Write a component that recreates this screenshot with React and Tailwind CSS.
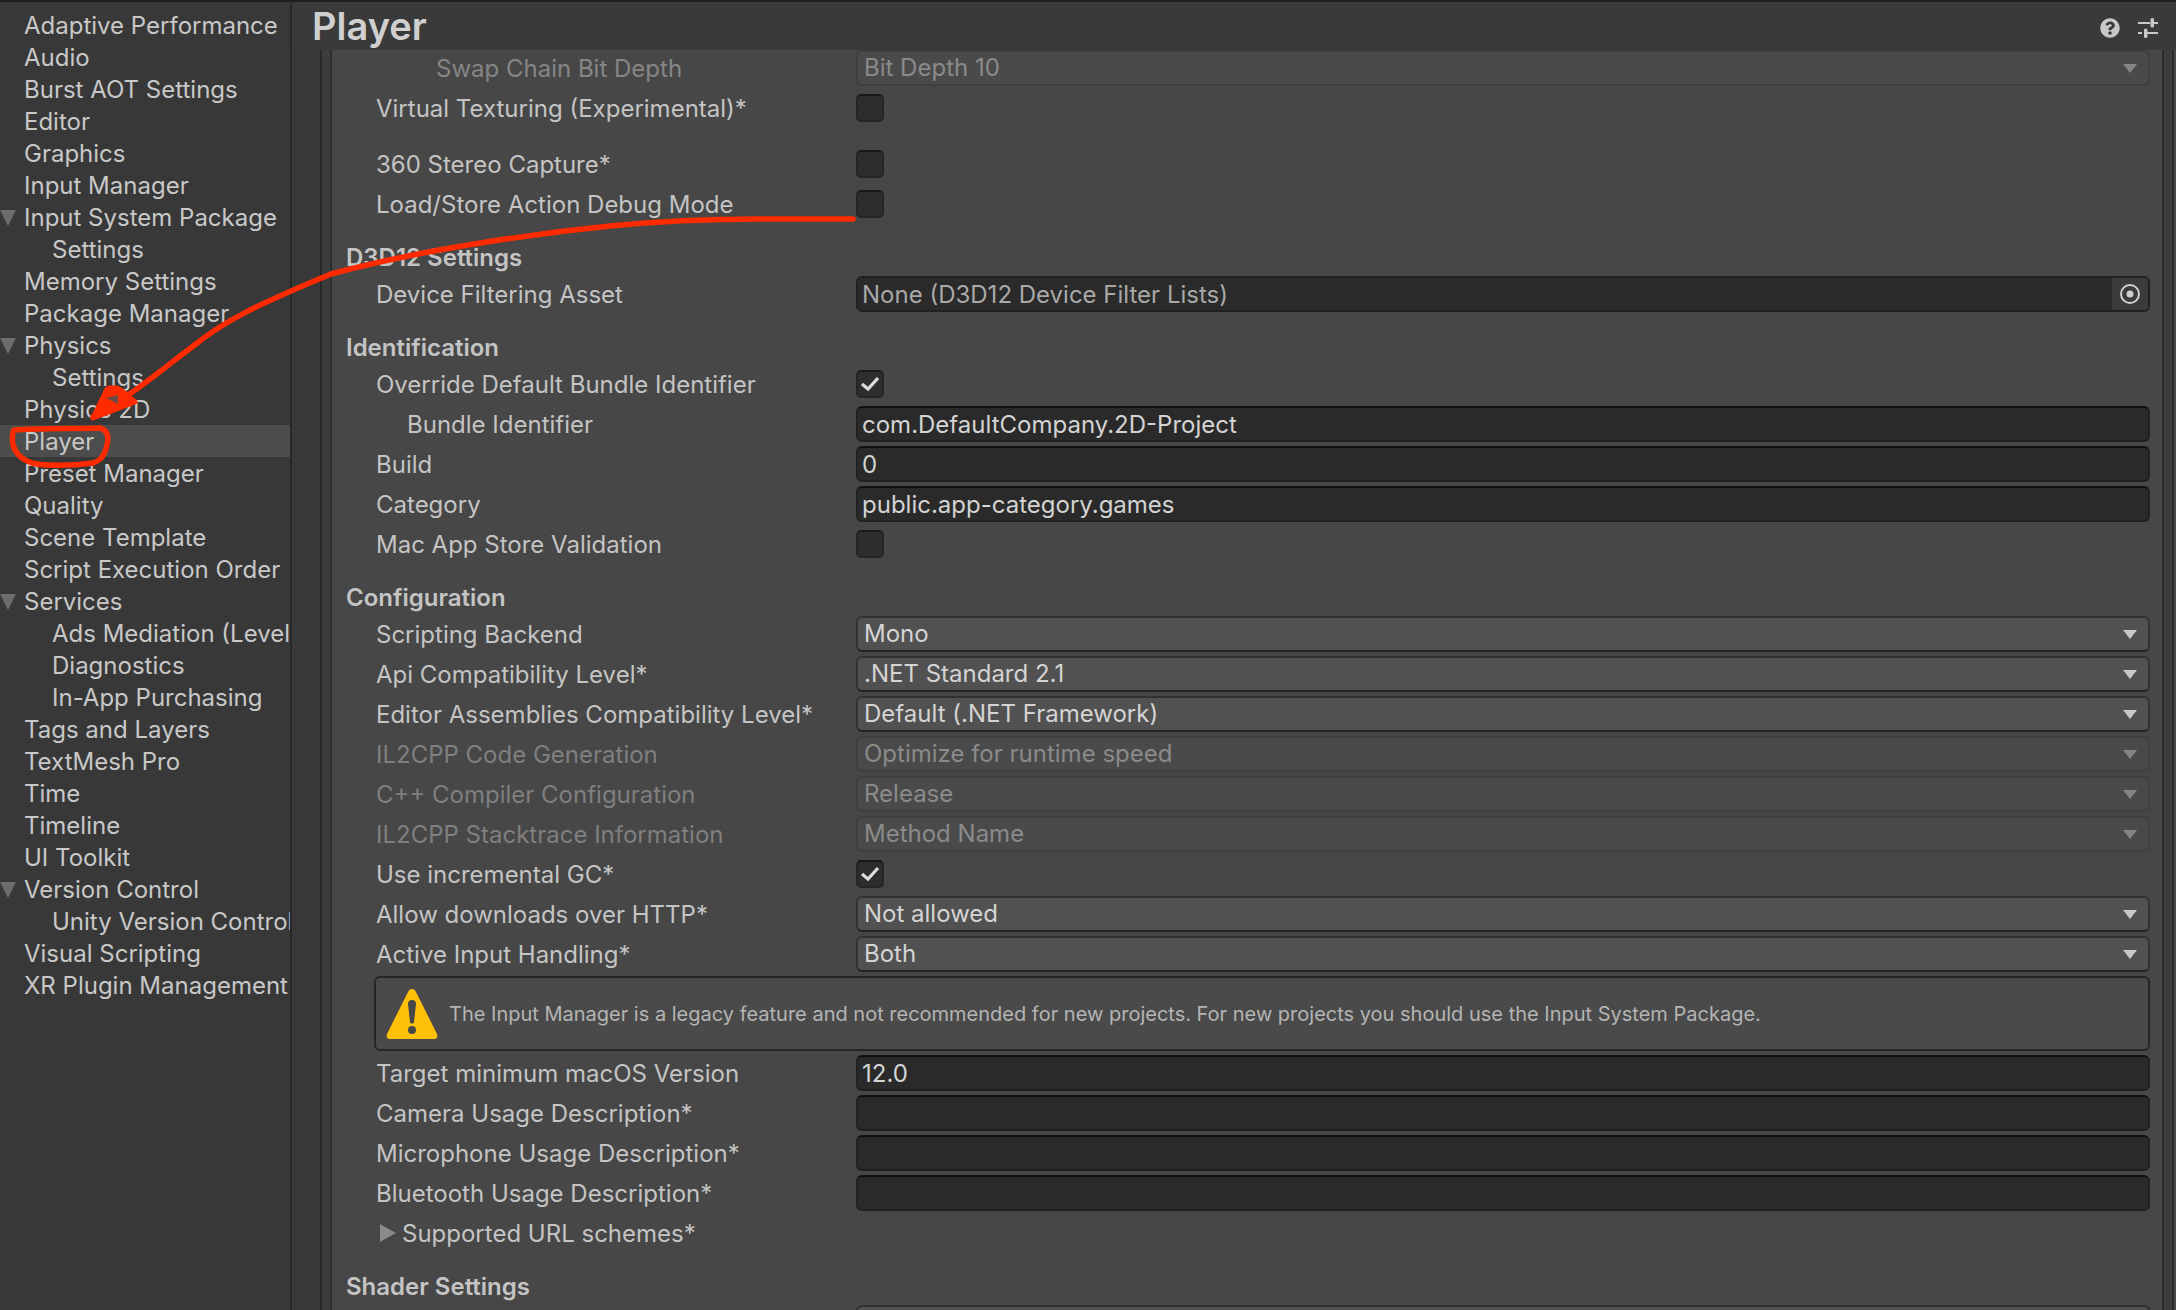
import React from "react";
import { FaQuestionCircle } from "react-icons/fa";

const sidebar = [
  ["Adaptive Performance"], ["Audio"], ["Burst AOT Settings"], ["Editor"], ["Graphics"], ["Input Manager"],
  ["Input System Package", "open"], ["Settings", "child"], ["Memory Settings"], ["Package Manager"],
  ["Physics", "open"], ["Settings", "child"], ["Physics 2D"], ["Player", "selected"], ["Preset Manager"],
  ["Quality"], ["Scene Template"], ["Script Execution Order"], ["Services", "open"],
  ["Ads Mediation (Level", "child"], ["Diagnostics", "child"], ["In-App Purchasing", "child"],
  ["Tags and Layers"], ["TextMesh Pro"], ["Time"], ["Timeline"], ["UI Toolkit"], ["Version Control", "open"],
  ["Unity Version Control", "child"], ["Visual Scripting"], ["XR Plugin Management"],
];

function DownArrow({ disabled }) {
  return (
    <svg width="14" height="9" viewBox="0 0 14 9" className="shrink-0">
      <polygon points="0,0 14,0 7,9" fill={disabled ? "#858585" : "#c8c8c8"} />
    </svg>
  );
}

function Dropdown({ value, disabled }) {
  return (
    <div
      className={
        disabled
          ? "flex h-9 w-full items-center justify-between rounded-md border-2 border-[#3f3f3f] bg-[#4a4a4a] pl-[6px] pr-[11px] text-[#8a8a8a]"
          : "flex h-9 w-full items-center justify-between rounded-md border-2 border-[#313131] border-b-[#232323] bg-[#515151] pl-[6px] pr-[11px] text-[#d4d4d4]"
      }
    >
      <span>{value}</span>
      <DownArrow disabled={disabled} />
    </div>
  );
}

function TextField({ value }) {
  return (
    <div className="flex h-9 w-full items-center rounded-md border-2 border-[#212121] border-t-[#0f0f0f] bg-[#2a2a2a] pl-1 pt-[2px] text-[#d4d4d4]">
      {value}
    </div>
  );
}

function ObjectField({ value }) {
  return (
    <div className="flex h-9 w-full items-center overflow-hidden rounded-md border-2 border-[#212121] bg-[#2a2a2a] pl-1 text-[#a8a8a8]">
      <span className="flex-1 pt-[2px]">{value}</span>
      <span className="flex h-full w-9 items-center justify-center bg-[#3b3b3b]">
        <svg width="22" height="22" viewBox="0 0 22 22">
          <circle cx="11" cy="11" r="9" fill="none" stroke="#cfcfcf" strokeWidth="2" />
          <circle cx="11" cy="11" r="3.5" fill="#cfcfcf" />
        </svg>
      </span>
    </div>
  );
}

function Checkbox({ checked }) {
  return (
    <div className="flex h-7 w-7 items-center justify-center rounded-[5px] border-2 border-[#252525] border-t-[#181818] bg-[#2d2d2d]">
      {checked && (
        <svg width="20" height="16" viewBox="0 0 20 16">
          <polyline points="2,8 8,13 18,2" fill="none" stroke="#dcdcdc" strokeWidth="3.2" />
        </svg>
      )}
    </div>
  );
}

function Row({ label, indent = "pl-[44px]", tone = "text-[#c4c4c4]", children }) {
  return (
    <div className="flex h-9 shrink-0 items-center">
      <div className={`w-[524px] shrink-0 whitespace-nowrap pt-[2px] ${indent} ${tone}`}>{label}</div>
      <div className="flex flex-1 items-center">{children}</div>
    </div>
  );
}

function Heading({ children }) {
  return (
    <div className="flex h-[46px] shrink-0 items-center pl-[14px] pt-[18px] font-semibold text-[#c4c4c4]">{children}</div>
  );
}

function WarningIcon() {
  return (
    <svg width="52" height="52" viewBox="0 0 52 52" className="shrink-0">
      <path d="M26 1 C28 1 29 2 30 4 L51 46 C52 49 51 51 48 51 L4 51 C1 51 0 49 1 46 L22 4 C23 2 24 1 26 1 Z" fill="#ffc107" />
      <path d="M26 12 C29 12 30 14 30 16 L28 34 C28 36 24 36 24 34 L22 16 C22 14 23 12 26 12 Z" fill="#474747" />
      <circle cx="26" cy="42" r="4" fill="#474747" />
    </svg>
  );
}

function Sidebar() {
  return (
    <aside className="w-[292px] shrink-0 overflow-hidden border-r-2 border-[#282828] bg-[#383838] pt-[7px]">
      {sidebar.map(([name, kind], i) => (
        <div
          key={i}
          className={`relative flex h-8 items-center overflow-hidden whitespace-nowrap pt-[2px] text-[#c8c8c8] ${
            kind === "selected" ? "bg-[#4d4d4d]" : ""
          } ${kind === "child" ? "pl-[52px]" : "pl-[24px]"}`}
        >
          {kind === "open" && (
            <svg width="16" height="16" viewBox="0 0 16 16" className="absolute left-0 top-[9px]">
              <polygon points="0,0 16,0 8,16" fill="#6d6d6d" />
            </svg>
          )}
          {name}
        </div>
      ))}
    </aside>
  );
}

function Header() {
  return (
    <header className="flex h-12 shrink-0 items-center justify-between bg-[#3a3a3a] pl-[20px] pr-[18px]">
      <h1 className="text-[38px] font-semibold leading-none text-[#d0d0d0]">Player</h1>
      <div className="flex items-center gap-[18px] pt-1">
        <FaQuestionCircle size={20} color="#c8c8c8" />
        <svg width="20" height="20" viewBox="0 0 20 20" fill="none">
          <path d="M0 5 H12 M16 5 H20 M0 15 H4 M8 15 H20" stroke="#c8c8c8" strokeWidth="2" />
          <rect x="12.5" y="0" width="3.5" height="9.5" rx="1.5" fill="#c8c8c8" />
          <rect x="6" y="10.5" width="3.5" height="9.5" rx="1.5" fill="#c8c8c8" />
        </svg>
      </div>
    </header>
  );
}

function Settings() {
  const dim = "text-[#7f7f7f]";
  return (
    <div className="flex h-full flex-col gap-1 overflow-hidden bg-[#474747] pr-3">
      <Row label="Swap Chain Bit Depth" indent="pl-[104px]" tone="text-[#868686]">
        <Dropdown value="Bit Depth 10" disabled />
      </Row>
      <Row label="Virtual Texturing (Experimental)*"><Checkbox /></Row>
      <div className="mt-4 shrink-0">
        <Row label="360 Stereo Capture*"><Checkbox /></Row>
      </div>
      <Row label="Load/Store Action Debug Mode"><Checkbox /></Row>
      <Heading>D3D12 Settings</Heading>
      <Row label="Device Filtering Asset"><ObjectField value="None (D3D12 Device Filter Lists)" /></Row>
      <Heading>Identification</Heading>
      <Row label="Override Default Bundle Identifier"><Checkbox checked /></Row>
      <Row label="Bundle Identifier" indent="pl-[75px]"><TextField value="com.DefaultCompany.2D-Project" /></Row>
      <Row label="Build"><TextField value="0" /></Row>
      <Row label="Category"><TextField value="public.app-category.games" /></Row>
      <Row label="Mac App Store Validation"><Checkbox /></Row>
      <Heading>Configuration</Heading>
      <Row label="Scripting Backend"><Dropdown value="Mono" /></Row>
      <Row label="Api Compatibility Level*"><Dropdown value=".NET Standard 2.1" /></Row>
      <Row label="Editor Assemblies Compatibility Level*"><Dropdown value="Default (.NET Framework)" /></Row>
      <Row label="IL2CPP Code Generation" tone={dim}><Dropdown value="Optimize for runtime speed" disabled /></Row>
      <Row label="C++ Compiler Configuration" tone={dim}><Dropdown value="Release" disabled /></Row>
      <Row label="IL2CPP Stacktrace Information" tone={dim}><Dropdown value="Method Name" disabled /></Row>
      <Row label="Use incremental GC*"><Checkbox checked /></Row>
      <Row label="Allow downloads over HTTP*"><Dropdown value="Not allowed" /></Row>
      <Row label="Active Input Handling*"><Dropdown value="Both" /></Row>
      <div className="ml-[42px] flex h-[75px] shrink-0 items-center gap-[11px] rounded-md border-2 border-[#262626] bg-[#4a4a4a] pl-[10px] text-[20px] text-[#b4b4b4]">
        <WarningIcon />
        <span className="whitespace-nowrap">
          The Input Manager is a legacy feature and not recommended for new projects. For new projects you should use the Input System Package.
        </span>
      </div>
      <Row label="Target minimum macOS Version"><TextField value="12.0" /></Row>
      <Row label="Camera Usage Description*"><TextField /></Row>
      <Row label="Microphone Usage Description*"><TextField /></Row>
      <Row label="Bluetooth Usage Description*"><TextField /></Row>
      <div className="flex h-9 shrink-0 items-center gap-[6px] pl-12 text-[#c4c4c4]">
        <svg width="16" height="18" viewBox="0 0 16 18">
          <polygon points="0,0 16,9 0,18" fill="#8a8a8a" />
        </svg>
        <span className="pt-[2px]">Supported URL schemes*</span>
      </div>
      <Heading>Shader Settings</Heading>
      <Row label=""><Dropdown value="" /></Row>
    </div>
  );
}

function Annotation() {
  return (
    <svg width="2176" height="1310" viewBox="0 0 2176 1310" className="pointer-events-none absolute left-0 top-0" fill="none">
      <path
        d="M853 217 L760 217 C700 217 660 219 610 224 C530 232 420 248 331 272 C259 302 225 318 192 345 C165 365 130 395 93 415"
        stroke="#ff2a00" strokeWidth="5.5" strokeLinecap="round" strokeLinejoin="round"
      />
      <path
        d="M93 416 L107 387 C112 385 118 386 122 389 L135 400 Z"
        stroke="#ff2a00" strokeWidth="5" fill="#ff2a00" strokeLinejoin="round"
      />
      <path d="M106 396 L118 393 L118 402 Z" fill="#6a4a42" />
      <path
        d="M14 428 C40 426 75 427 100 426 C108 428 109 436 107 443 C105 452 102 458 93 461 C70 464 45 464 32 461 C20 457 15 450 13 443 C12 437 12 432 14 428 Z"
        stroke="#ff2a00" strokeWidth="5.5" strokeLinejoin="round"
      />
    </svg>
  );
}

export default function App() {
  return (
    <div className="relative h-[1310px] w-full overflow-hidden border-t-2 border-[#1f1f1f] bg-[#383838] text-[24px] leading-none [font-family:Inter,'Liberation_Sans',sans-serif]">
      <div className="flex h-full">
        <Sidebar />
        <main className="flex min-w-0 flex-1 flex-col">
          <Header />
          <div className="flex min-h-0 flex-1">
            <div className="w-[30px] shrink-0 border-r-2 border-[#2a2a2a] bg-[#383838]" />
            <div className="w-[10px] shrink-0 border-r-2 border-[#2e2e2e] bg-[#3c3c3c]" />
            <div className="min-w-0 flex-1"><Settings /></div>
            <div className="w-[10px] shrink-0 border-l-2 border-[#2a2a2a] bg-[#3c3c3c]" />
            <div className="w-[4px] shrink-0 border-l-2 border-[#2a2a2a] bg-[#474747]" />
          </div>
        </main>
      </div>
      <Annotation />
    </div>
  );
}
